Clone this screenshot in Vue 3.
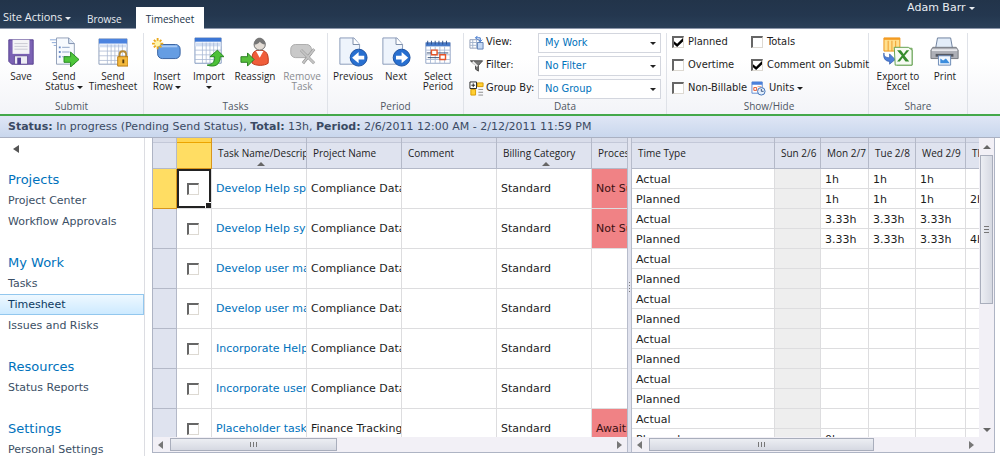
<script setup>
import { ref } from 'vue'

const view = ref('My Work')
const filter = ref('No Filter')
const group = ref('No Group')

const nav = [
  { title: 'Projects', links: ['Project Center', 'Workflow Approvals'] },
  { title: 'My Work', links: ['Tasks', 'Timesheet', 'Issues and Risks'] },
  { title: 'Resources', links: ['Status Reports'] },
  { title: 'Settings', links: ['Personal Settings'] },
]

const tasks = [
  { name: 'Develop Help specification', project: 'Compliance Database', status: 'Not Submitted' },
  { name: 'Develop Help system', project: 'Compliance Database', status: 'Not Submitted' },
  { name: 'Develop user manuals', project: 'Compliance Database', status: '' },
  { name: 'Develop user materials', project: 'Compliance Database', status: '' },
  { name: 'Incorporate Help feedback', project: 'Compliance Database', status: '' },
  { name: 'Incorporate user feedback', project: 'Compliance Database', status: '' },
  { name: 'Placeholder task', project: 'Finance Tracking', status: 'Awaiting' },
]

const days = ['Sun 2/6', 'Mon 2/7', 'Tue 2/8', 'Wed 2/9', 'Thu 2/10']
const hours = [
  ['', '1h', '1h', '1h', ''],
  ['', '1h', '1h', '1h', '2h'],
  ['', '3.33h', '3.33h', '3.33h', ''],
  ['', '3.33h', '3.33h', '3.33h', '4h'],
  ...Array.from({ length: 9 }, () => ['', '', '', '', '']),
  ['', '0h', '', '', ''],
]
</script>

<template>
  <div class="page">
    <header class="topbar">
      <button class="site-actions">Site Actions <i class="caret"></i></button>
      <a class="tab" href="#">Browse</a>
      <a class="tab active" href="#">Timesheet</a>
      <button class="user">Adam Barr <i class="caret"></i></button>
    </header>

    <div class="ribbon">
      <section class="group g-submit">
        <div class="tools">
          <button class="w42">
            <svg viewBox="0 0 32 32"><path d="M3 3h26v26H6l-3-3z" fill="#7b62b4" stroke="#56408f" /><path d="M7 3h18v15H7z" fill="#f4f4f6" /><path d="M9 7h14M9 10h14M9 13h14" stroke="#c9c9d2" /><path d="M9 20h14v9H9z" fill="#ededf4" stroke="#655098" /><path d="M12 22h4v7h-4z" fill="#59439a" /></svg>
            <span>Save</span>
          </button>
          <button class="w44">
            <svg viewBox="0 0 32 32"><path d="M1 3h7M3 6h5M5 9h3" stroke="#8aa6d6" /><path d="M8 1h13l6 6v22H8z" fill="#f7fafe" stroke="#8f9db5" /><path d="M21 1v6h6" fill="#dfe8f5" stroke="#7b8cab" /><path d="M14 11h8M14 16h8M14 21h6" stroke="#8aa0c4" /><path d="M10.500 10h2v2h-2zM10.500 15h2v2h-2zM10.500 20h2v2h-2z" fill="#6b8cc7" /><path d="M16 21h7v-5l9 8-9 8v-5h-7z" fill="#4fc63b" stroke="#23861d" /></svg>
            <span>Send<br />Status <i class="caret"></i></span>
          </button>
          <button class="w54">
            <svg viewBox="0 0 32 32"><path d="M1 2h30v27H1z" fill="#fff" stroke="#8b9cba" /><path d="M1 2h30v5H1z" fill="#4b83df" /><path d="M1 8h30v3H1z" fill="#d3dff3" /><path d="M1 15h30M1 20h30M1 25h30M10 8v21M14 8v21M18 8v21M22 8v21M26 8v21" stroke="#a9b7d0" stroke-width=".8" /><path d="M23 22v-3c0-5 7-5 7 0v3" fill="none" stroke="#b78a35" stroke-width="2" /><path d="M21 21h11v10H21z" fill="#f4b93c" stroke="#b67a14" /><path d="M26 24h2v4h-2z" fill="#573b0b" /></svg>
            <span>Send<br />Timesheet</span>
          </button>
        </div>
        <h2>Submit</h2>
      </section>

      <section class="group g-tasks">
        <div class="tools">
          <button class="w42">
            <svg viewBox="0 0 32 32"><rect x="6" y="8" width="24" height="15" rx="5" fill="#659de3" stroke="#345f9f" /><path d="M9 10h18" stroke="#a7c9f4" stroke-width="2" /><path d="M6 1v12M0 7h12M2 3l8 8M10 3l-8 8" stroke="#eaa91c" stroke-width="2" /><circle cx="6" cy="7" r="3" fill="#fff5a8" /></svg>
            <span>Insert<br />Row <i class="caret"></i></span>
          </button>
          <button class="w42">
            <svg viewBox="0 0 32 32"><path d="M1 1h28v27H1z" fill="#fff" stroke="#7f96be" /><path d="M1 1h28v4H1z" fill="#3c76d4" /><path d="M1 6h28v4H1z" fill="#d3dff3" /><path d="M1 14h28M1 19h28M1 24h28M9 6v22M13 6v22M17 6v22M21 6v22M25 6v22" stroke="#a5b5d3" stroke-width=".8" /><path d="M14 30c7-1 8-4 8-9h-5l8-7 7 7h-4c0 8-5 12-14 9z" fill="#4dc138" stroke="#21831c" /></svg>
            <span>Import<br /><i class="caret"></i></span>
          </button>
          <button class="w50">
            <svg viewBox="0 0 32 32"><path d="M13 28c-1-10 1-14 8-14s10 4 9 14c-4 3-13 3-17 0z" fill="#f05d3a" stroke="#b93416" /><path d="M17 15l4 7 4-7z" fill="#fff" /><circle cx="21" cy="8" r="6" fill="#e3dcd5" stroke="#666" /><path d="M15 8c0-10 12-9 12 0-3 0-5-2-6-3-1 2-3 3-6 3z" fill="#777" /><path d="M1 21h7v-4l7 7-7 7v-4H1z" fill="#58bf3c" stroke="#267c1f" /></svg>
            <span>Reassign</span>
          </button>
          <button class="w44 disabled" disabled>
            <svg viewBox="0 0 32 32"><rect x="4" y="8" width="22" height="14" rx="5" fill="#c9c9c9" stroke="#aaa" /><path d="M15 14l14 14M29 13L17 28" stroke="#8e8e8e" stroke-width="3" /><path d="M15 14l14 14M29 13L17 28" stroke="#c5c5c5" stroke-width="2" /></svg>
            <span>Remove<br />Task</span>
          </button>
        </div>
        <h2>Tasks</h2>
      </section>

      <section class="group g-period">
        <div class="tools">
          <button class="w46">
            <svg viewBox="0 0 32 32"><path d="M2 1h15l6 7v21H2z" fill="#eef4fc" stroke="#8598b6" /><path d="M16 1v7h7" fill="#fff" stroke="#7587a4" /><circle cx="22" cy="22" r="9" fill="#276fd0" stroke="#174c9c" /><path d="M15 22l7-6v4h6v4h-6v4z" fill="#fff" /></svg>
            <span>Previous</span>
          </button>
          <button class="w40">
            <svg viewBox="0 0 32 32"><path d="M2 1h15l6 7v21H2z" fill="#eef4fc" stroke="#8598b6" /><path d="M16 1v7h7" fill="#fff" stroke="#7587a4" /><circle cx="22" cy="22" r="9" fill="#276fd0" stroke="#174c9c" /><path d="M29 22l-7-6v4h-6v4h6v4z" fill="#fff" /></svg>
            <span>Next</span>
          </button>
          <button class="w44">
            <svg viewBox="0 0 32 32"><path d="M3 6h26v22H3z" fill="#fff" stroke="#91a3c4" /><path d="M3 6h26v4H3z" fill="#4679c8" /><path d="M5 4v4M9 4v4M13 4v4M17 4v4M21 4v4M25 4v4" stroke="#294c87" /><path d="M3 14h26M3 19h26M3 24h26M8 10v18M13 10v18M18 10v18M23 10v18" stroke="#aebdd7" /><path d="M4 17h6M14 17h13M5 22h14" stroke="#344c72" /><path d="M9 14h6v5H9zM18 19h6v5h-6z" fill="#fff" stroke="#e55329" stroke-width="1.500" /></svg>
            <span>Select<br />Period</span>
          </button>
        </div>
        <h2>Period</h2>
      </section>

      <section class="group g-data">
        <div class="fields">
          <svg viewBox="0 0 16 16"><path d="M1 5h10v9H1z" fill="#fff" stroke="#8f9cb5" /><path d="M1 8h10M1 11h10M4 5v9M8 5v9" stroke="#a3b3cd" /><path d="M9 8h6v7H9z" fill="#c6d9f4" stroke="#5d80b5" /><path d="M7 3h5v4M9 1L7 3l2 2M10 5l2 2 2-2" fill="none" stroke="#2f6bc9" /></svg>
          <label for="view">View:</label>
          <div class="combo"><select id="view" v-model="view"><option>My Work</option></select></div>
          <svg viewBox="0 0 16 16"><path d="M1.500 3h13L10 8v6l-3-2V8z" fill="#777" stroke="#444" /><path d="M4 4l5 5" stroke="#eee" stroke-width="2" /></svg>
          <label for="filter">Filter:</label>
          <div class="combo"><select id="filter" v-model="filter"><option>No Filter</option></select></div>
          <svg viewBox="0 0 16 16"><path d="M9 2h6v4H9zM2 9h5v6H2z" fill="#ffcf33" stroke="#d79a00" /><path d="M10 9h5M10 12h5M10 15h5" stroke="#8a8a8a" /><path d="M1 1h7v7H1z" fill="#fff" stroke="#222" /><path d="M4.500 2.500v4M2.500 4.500h4" stroke="#222" /></svg>
          <label for="group">Group By:</label>
          <div class="combo"><select id="group" v-model="group"><option>No Group</option></select></div>
        </div>
        <h2>Data</h2>
      </section>

      <section class="group g-show">
        <div class="checks">
          <label><input type="checkbox" checked />Planned</label>
          <label><input type="checkbox" />Totals</label>
          <label><input type="checkbox" />Overtime</label>
          <label><input type="checkbox" checked />Comment on Submit</label>
          <label><input type="checkbox" />Non-Billable</label>
          <button class="units">
            <svg viewBox="0 0 16 16"><path d="M1 1h11v12H1z" fill="#fff" stroke="#5f8ad0" /><path d="M1 1h11v3H1z" fill="#4a80db" /><path d="M3 7h3v3H3z" fill="none" stroke="#e2562f" /><path d="M7 6h4M7 9h3" stroke="#e89b7d" /><circle cx="11" cy="11" r="4" fill="#e4effc" stroke="#3d6fb5" /><path d="M11 8.500V11h2.500" fill="none" stroke="#35527e" /></svg>
            Units <i class="caret"></i>
          </button>
        </div>
        <h2>Show/Hide</h2>
      </section>

      <section class="group g-share">
        <div class="tools">
          <button class="w54">
            <svg viewBox="0 0 32 32"><path d="M1 1h17v14H1z" fill="#ffe08f" stroke="#ec9114" /><path d="M1 2h17" stroke="#f49b21" stroke-width="2" /><path d="M5.500 4v11M9.500 4v11M13.500 4v11" stroke="#ed9b2a" /><path d="M1 17c0 4 2 5 6 5v-4l6 6-6 5v-3c-5 0-7-4-6-9z" fill="#4d7fda" stroke="#2c55a5" stroke-width=".7" /><path d="M15 12h16v18H15z" fill="#e3f1dd" stroke="#66a053" /><path d="M12 11h15l4 3v16H13z" fill="#f6fbf3" stroke="#5d9e4a" /><path d="M15 14h4l3 4 3-4h3l-5 6 5 6h-4l-3-4-3 4h-3l5-6z" fill="#368c2d" /></svg>
            <span>Export to<br />Excel</span>
          </button>
          <button class="w40">
            <svg viewBox="0 0 32 32"><path d="M8 1h14l2 11H6z" fill="#e3edf9" stroke="#6a7d9b" /><path d="M3 11h25l2 3v9H1v-9z" fill="#adafb6" stroke="#74777f" /><path d="M2 14h27" stroke="#e7e8ec" stroke-width="2" /><path d="M6 18h19v3H6z" fill="#555963" /><path d="M9 20h13v10H9z" fill="#eff6fe" stroke="#6886b3" /><path d="M11 28v-5l3 2 3-2 4 5z" fill="#3c8ddd" /></svg>
            <span>Print</span>
          </button>
        </div>
        <h2>Share</h2>
      </section>
    </div>

    <div class="status">
      <b>Status:</b> In progress (Pending Send Status), <b>Total:</b> 13h, <b>Period:</b> 2/6/2011 12:00 AM - 2/12/2011 11:59 PM
    </div>

    <div class="body">
      <nav class="sidebar">
        <button class="collapse" aria-label="Collapse navigation"><i class="tri left"></i></button>
        <section v-for="s in nav" :key="s.title">
          <h3><a href="#">{{ s.title }}</a></h3>
          <a v-for="l in s.links" :key="l" href="#" :class="{ current: l === 'Timesheet' }">{{ l }}</a>
        </section>
      </nav>

      <main class="sheet">
        <div class="pane">
          <table class="task-table">
            <colgroup><col class="c-row" /><col class="c-check" /><col class="c-std" /><col class="c-std" /><col class="c-std" /><col class="c-std" /><col class="c-std" /></colgroup>
            <thead>
              <tr>
                <th></th>
                <th class="picked"></th>
                <th>Task Name/Description<i class="tri up sort"></i></th>
                <th>Project Name</th>
                <th>Comment</th>
                <th>Billing Category<i class="tri up sort"></i></th>
                <th>Process Status</th>
              </tr>
            </thead>
            <tbody>
              <tr v-for="(t, i) in tasks" :key="i">
                <th :class="{ picked: i === 0 }"></th>
                <td class="check" :class="{ cursor: i === 0 }"><input type="checkbox" :aria-label="t.name" /></td>
                <td><a href="#">{{ t.name }}</a></td>
                <td>{{ t.project }}</td>
                <td></td>
                <td>Standard</td>
                <td :class="{ alert: t.status }">{{ t.status }}</td>
              </tr>
            </tbody>
          </table>
        </div>
        <div class="splitter"><i class="grip"></i></div>
        <div class="pane-wrap">
          <div class="pane">
            <table class="time-table">
              <colgroup><col class="c-type" /><col class="c-sun" /><col class="c-mon" /><col class="c-tue" /><col class="c-wed" /><col class="c-mon" /></colgroup>
              <thead>
                <tr><th>Time Type</th><th v-for="d in days" :key="d">{{ d }}</th></tr>
              </thead>
              <tbody>
                <tr v-for="(r, i) in hours" :key="i">
                  <td>{{ i % 2 ? 'Planned' : 'Actual' }}</td>
                  <td v-for="(h, j) in r" :key="j" :class="{ off: j === 0 }">{{ h }}</td>
                </tr>
              </tbody>
            </table>
          </div>
          <div class="vbar">
            <i class="tri up"></i>
            <div class="thumb"><i class="grip"></i></div>
            <i class="tri down"></i>
          </div>
        </div>
        <div class="hbar first"><i class="tri left"></i><div class="track"><div class="thumb"><i class="grip"></i></div></div><i class="tri right"></i></div>
        <div class="splitter"></div>
        <div class="hbar second"><i class="tri left"></i><div class="track"><div class="thumb"><i class="grip"></i></div></div><i class="tri right"></i></div>
      </main>
    </div>
  </div>
</template>

<style>
body { margin: 0; background: #fff; }
</style>

<style scoped>
* { box-sizing: border-box; }
.page {
  display: flex;
  flex-direction: column;
  height: 100vh;
  overflow: hidden;
  font: 11px/20px "DejaVu Sans", sans-serif;
  color: #1d1d1d;
}
button { border: 0; padding: 0; background: none; font: inherit; color: inherit; }
a { color: inherit; text-decoration: none; }
h2, h3 { margin: 0; font-weight: normal; }
input { appearance: none; flex: none; position: relative; width: 12px; height: 12px; margin: 0; background: #fff; border: 1px solid #ddd9d2; border-top: 2px solid #666; border-left: 2px solid #666; }
input:checked::after { content: ""; position: absolute; inset: 0; background: #000; clip-path: polygon(0 35%, 35% 65%, 100% 0, 100% 38%, 35% 100%, 0 70%); }
.caret { display: inline-block; border: 3px solid transparent; border-top-color: currentColor; border-bottom: 0; vertical-align: middle; }

/* top bar and ribbon */
.topbar {
  display: flex;
  flex: none;
  height: 29px;
  background: linear-gradient(#22344a, #24374f 55%, #2b4059);
  border-bottom: 1px solid #8d97ab;
  color: #e9edf2;
  line-height: 16px;
}
.site-actions, .tab { font-family: "Open Sans", "Noto Sans", sans-serif; }
.site-actions { align-self: flex-start; width: 74px; margin: 9px 0 0 3px; text-align: left; white-space: nowrap; }
.tab { align-self: flex-end; height: 21px; padding: 3px 10px 0; margin-bottom: -1px; font-size: 10px; }
.tab.active { background: #fff; color: #23354b; height: 22px; margin-left: 4px; padding-top: 4px; }
.user { align-self: flex-start; margin: 0 25px 0 auto; }
.ribbon {
  display: flex;
  flex: none;
  height: 87px;
  padding-top: 4px;
  background: linear-gradient(#fff 35%, #f3f4f8);
  border-bottom: 2px solid #43a84a;
}
.group { display: flex; flex-direction: column; justify-content: space-between; border-right: 1px solid #dfe2e8; flex: none; }
.group h2 { text-align: center; font: 10px/15px "Open Sans", "Noto Sans", sans-serif; color: #4f5763; }
.g-submit { width: 144px; }
.g-tasks { width: 184px; padding: 0 2px; }
.g-period { width: 136px; padding: 0 2px; }
.g-data { width: 203px; padding: 0 5px; }
.g-show { width: 202px; padding: 0 2px 0 5px; }
.g-share { width: 99px; padding: 0 2px; }
.tools { display: flex; align-items: flex-start; padding-top: 4px; }
.tools button { display: flex; flex-direction: column; align-items: center; line-height: 10px; gap: 4px; flex: none; white-space: nowrap; text-align: center; }
.tools svg { width: 30px; height: 30px; display: block; }
.tools span { font-family: "Open Sans", "Noto Sans", sans-serif; font-size: 10px; }
.w40 { width: 40px; } .w42 { width: 42px; } .w44 { width: 44px; } .w46 { width: 46px; } .w50 { width: 50px; } .w54 { width: 54px; }
.disabled { color: #8a8d92; }
.fields, .checks { font-family: "DejaVu Sans Condensed", "Open Sans", sans-serif; }
.fields { display: grid; grid-template-columns: 15px 50px 1fr; grid-auto-rows: 20px; column-gap: 2px; row-gap: 3px; }
.fields svg { width: 15px; height: 15px; margin-top: 2px; }
.fields label { line-height: 18px; white-space: nowrap; }
.combo { position: relative; }
.combo select { appearance: none; width: 100%; height: 20px; border: 1px solid #d3d6de; border-radius: 0; background: #fff; color: #0072bc; font: inherit; line-height: 18px; padding: 0 16px 0 6px; }
.combo::after { content: ""; position: absolute; right: 5px; top: 9px; border: 3px solid transparent; border-top-color: #222; border-bottom: 0; }
.checks { display: grid; grid-template-columns: 79px 1fr; grid-auto-rows: 18px; row-gap: 5px; }
.checks label { display: flex; align-items: center; gap: 4px; white-space: nowrap; line-height: 16px; }
.units { display: flex; align-items: center; gap: 3px; line-height: 16px; }
.units svg { width: 15px; height: 15px; }

.status { flex: none; height: 22px; padding-left: 8px; background: linear-gradient(#dfe6f5, #c9d7ed); border-bottom: 1px solid #aab1c2; color: #3b4a63; line-height: 22px; white-space: nowrap; }

/* page body */
.body { display: flex; flex: 1; min-height: 0; padding-right: 5px; }
.sidebar { flex: none; width: 145px; border-right: 1px solid #dcdde2; color: #3b4f65; line-height: 21px; overflow: hidden; }
.sidebar section { margin-bottom: 20px; }
.sidebar a { display: block; height: 21px; padding-left: 8px; white-space: nowrap; }
.sidebar h3 { font-size: 13px; color: #0072bc; }
.sidebar .current { line-height: 19px; background: linear-gradient(#eef8ff, #cdeaff); border: 1px solid #92c7ee; border-left: 0; color: #0d3a61; }
.collapse { display: flex; height: 31px; padding: 7px 0 0 13px; }
.tri { display: block; flex: none; width: 0; height: 0; border: 4px solid transparent; }
.tri.left { border-right: 6px solid #555; border-left: 0; }
.tri.right { border-left: 5px solid #777; border-right: 0; }
.tri.up { border-bottom: 4px solid #666; border-top: 0; }
.tri.down { border-top: 4px solid #666; border-bottom: 0; }
.hbar .tri.left { border-right: 5px solid #777; }

.sheet {
  flex: 1;
  min-width: 0;
  display: grid;
  grid-template-columns: minmax(0, 474fr) 5px minmax(0, 362fr);
  grid-template-rows: minmax(0, 1fr) 15px;
  margin: 0 0 3px 7px;
  border: 1px solid #aeb4c4;
  border-top: 0;
}
.pane { overflow: hidden; min-width: 0; flex: 1; }
.pane-wrap { display: flex; min-height: 0; }
table { table-layout: fixed; border-collapse: separate; border-spacing: 0; width: 0; }
.c-row { width: 24px; } .c-check { width: 35px; } .c-std { width: 95px; }
.c-type { width: 143px; } .c-sun { width: 46px; } .c-mon { width: 48px; } .c-tue { width: 47px; } .c-wed { width: 50px; }
th, td { padding: 0 0 0 4px; border-right: 1px solid #dddddf; border-bottom: 1px solid #dddddf; overflow: hidden; white-space: nowrap; text-align: left; font-weight: normal; }
thead th { position: relative; height: 31px; padding: 0 0 0 6px; background: linear-gradient(#d9ddea 4px, #c3c8d8 4px, #c3c8d8 5px, #dfe3ef 5px); border-color: #b4b9c8; font: 10px/16px "Open Sans", "Noto Sans", sans-serif; color: #222; }
.sort { position: absolute; left: 45px; bottom: 2px; }
.task-table td, .task-table tbody th { height: 40px; }
.task-table td { padding-top: 1px; }
.time-table td { height: 20px; line-height: 17px; padding-top: 2px; }
.task-table tbody th { background: #dfe3ef; border-color: #b4b9c8; }
th.picked, .task-table tbody th.picked { background: #ffdd63; border-color: #d8961c; }
thead th.picked { background: linear-gradient(#ffd54f 4px, #eca400 4px, #eca400 5px, #ffdd63 5px); }
td a { color: #0072bc; }
.task-table .check { padding: 0 2px 0 0; text-align: center; line-height: 0; }
.check input { vertical-align: middle; }
.cursor { position: relative; box-shadow: inset 0 0 0 2px #222; }
.cursor::after { content: ""; position: absolute; right: 0; bottom: 0; width: 5px; height: 5px; background: #222; border: 1px solid #fff; border-width: 1px 0 0 1px; }
.alert { background: #f08285; color: #3c1012; }
.off { background: #eeeeee; }
.splitter { display: flex; align-items: center; justify-content: center; background: #e1e3ee; border-left: 1px solid #b7bccb; border-right: 1px solid #b7bccb; }
.grip { display: block; flex: none; }
.splitter .grip { width: 1px; height: 12px; background: repeating-linear-gradient(#777 0 1px, transparent 1px 3px); }
.hbar { display: flex; align-items: center; gap: 7px; padding: 0 5px; background: #f2f0f6; }
.track { flex: 1; height: 13px; }
.hbar .thumb { height: 13px; display: flex; align-items: center; justify-content: center; background: linear-gradient(#eceef3, #d6d9e2); border: 1px solid #a9aebc; }
.first .thumb { width: 38%; }
.second .thumb { width: 72%; }
.second { padding-right: 20px; }
.hbar .grip { width: 7px; height: 5px; background: repeating-linear-gradient(90deg, #777 0 1px, transparent 1px 3px); }
.vbar { flex: none; width: 15px; display: flex; flex-direction: column; align-items: center; padding: 7px 0 5px; background: #f2f0f6; }
.vbar .thumb { width: 13px; height: 52%; margin: 6px 0 auto; display: flex; align-items: center; justify-content: center; background: linear-gradient(90deg, #eceef3, #d6d9e2); border: 1px solid #a9aebc; }
.vbar .grip { width: 5px; height: 7px; background: repeating-linear-gradient(#777 0 1px, transparent 1px 3px); }
</style>
